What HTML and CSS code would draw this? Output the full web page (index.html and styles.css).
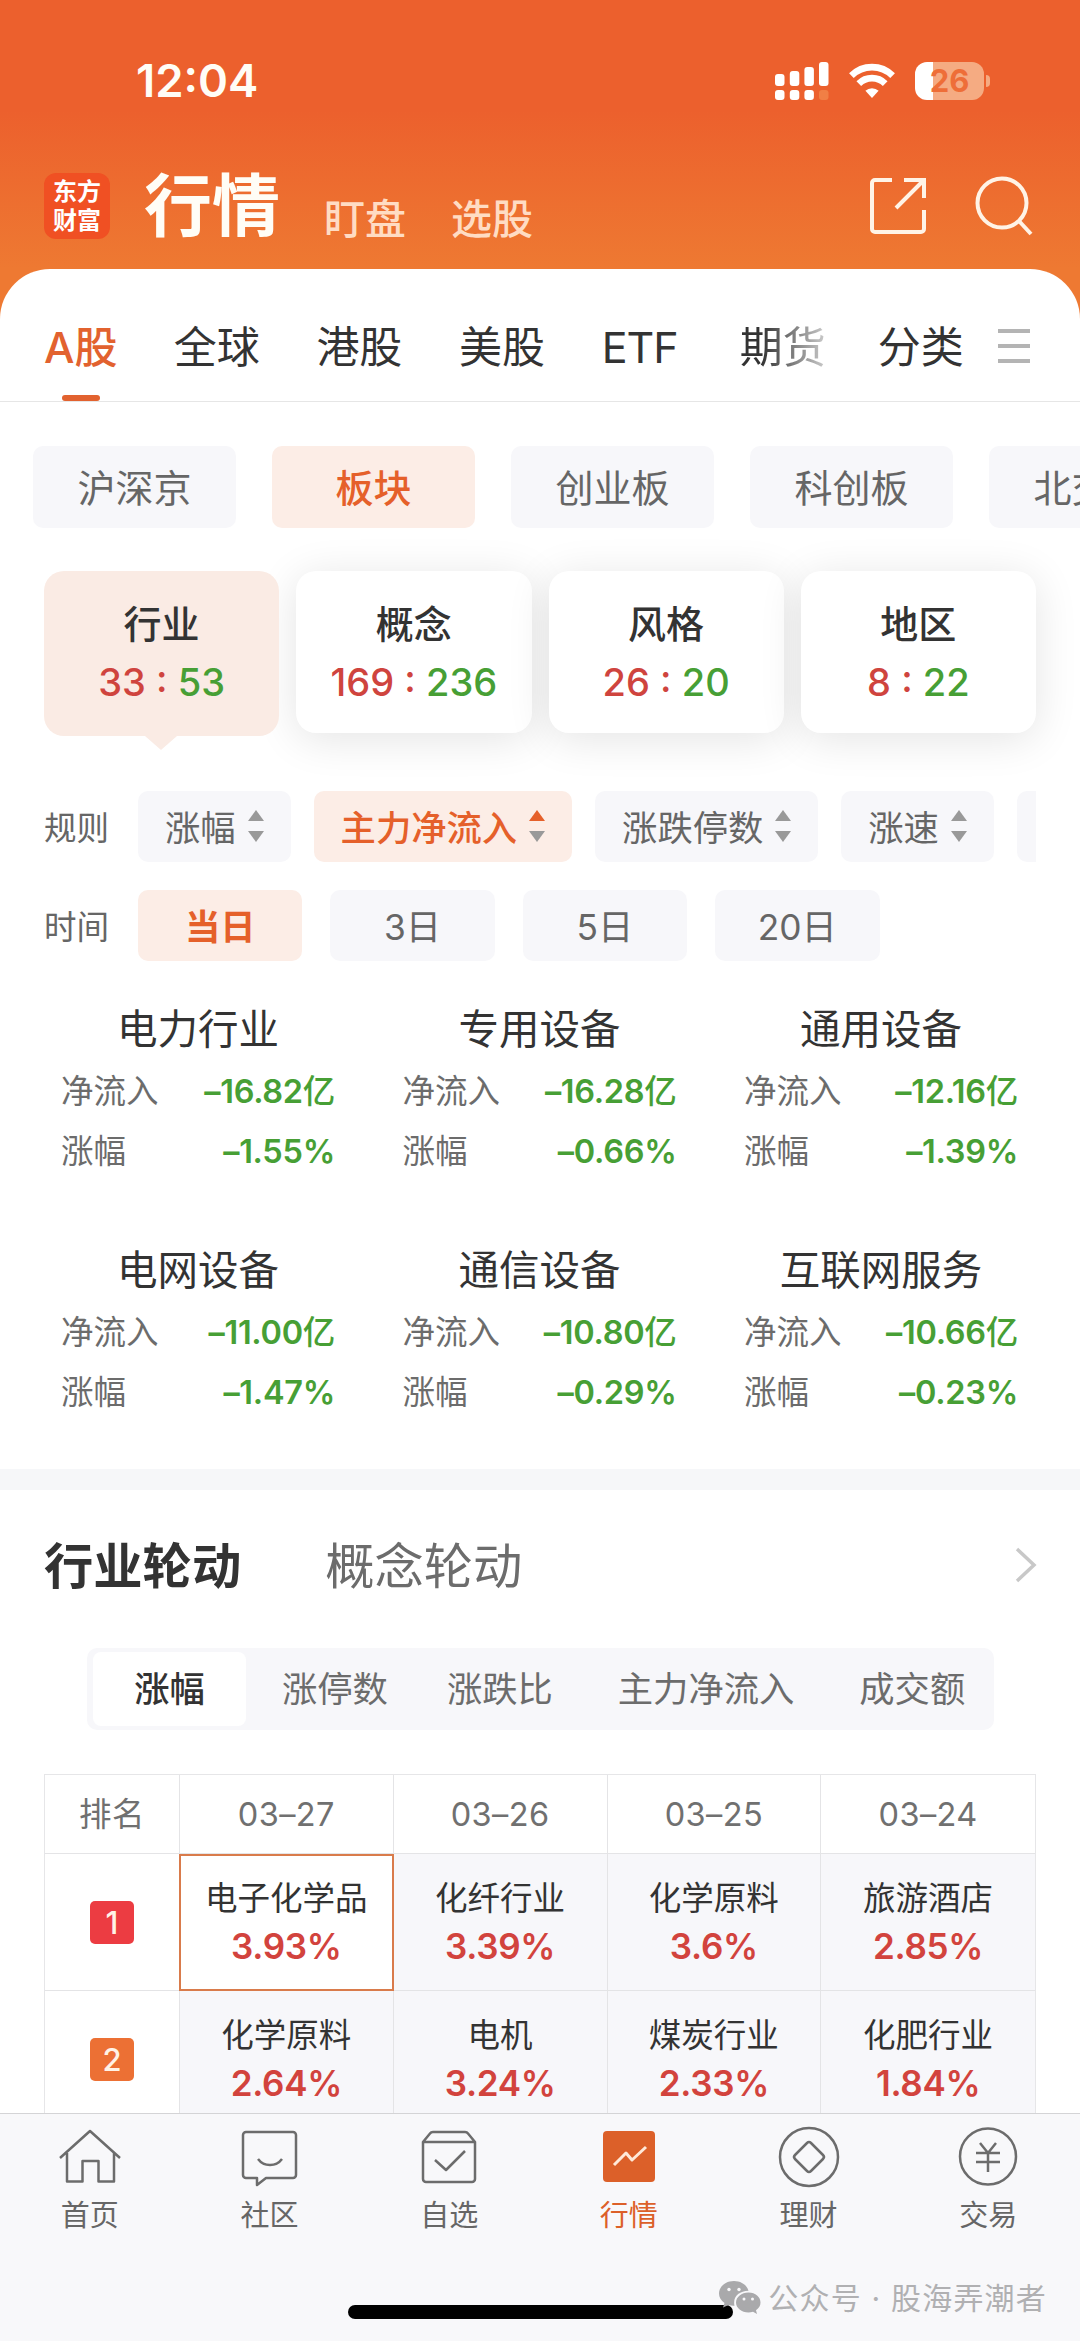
FILE: index.html
```html
<!DOCTYPE html>
<html lang="zh-CN">
<head>
<meta charset="UTF-8">
<title>行情</title>
<link rel="stylesheet" href="styles.css">
</head>
<body>
<div class="app">
  <header class="header">
    <div class="status">
      <span class="time">12:04</span>
      <svg class="signal" width="54" height="38" viewBox="0 0 54 38" fill="#fff">
        <rect x="0" y="12" width="9.5" height="12" rx="3"/>
        <rect x="14.8" y="9" width="9.5" height="15" rx="3"/>
        <rect x="29.4" y="5" width="9.5" height="19" rx="3"/>
        <rect x="44" y="0" width="9.5" height="24" rx="3"/>
        <rect x="0" y="28" width="9.5" height="10" rx="3"/>
        <rect x="14.8" y="28" width="9.5" height="10" rx="3"/>
        <rect x="29.4" y="28" width="9.5" height="10" rx="3"/>
        <rect x="44" y="28" width="9.5" height="10" rx="3" fill="#f17f45"/>
      </svg>
      <svg class="wifi" width="46" height="36" viewBox="0 0 46 36" fill="none" stroke="#fff" stroke-width="6.6">
        <path d="M2.4 12.6a29.2 29.2 0 0 1 41.2 0"/>
        <path d="M9.8 20.6a18.6 18.6 0 0 1 26.4 0"/>
        <path d="M23 35l-6.6-7.2a9.5 9.5 0 0 1 13.2 0z" fill="#fff" stroke="none"/>
      </svg>
      <div class="battery"><span>26</span></div>
      <i class="battery-cap"></i>
    </div>
    <div class="topbar">
      <div class="logo">东方<br>财富</div>
      <h1>行情</h1>
      <span class="top-link">盯盘</span>
      <span class="top-link">选股</span>
      <svg class="icon-share" width="56" height="58" viewBox="0 0 56 58" fill="none" stroke="#fff3e6" stroke-width="4">
        <path d="M22 3H5a3 3 0 0 0-3 3v46a3 3 0 0 0 3 3h46a3 3 0 0 0 3-3V33"/>
        <path d="M34 3h20v18M54 3L26 31"/>
      </svg>
      <svg class="icon-search" width="60" height="60" viewBox="0 0 60 60" fill="none" stroke="#fff3e6" stroke-width="4">
        <circle cx="28" cy="27" r="24.5"/>
        <path d="M45 45l12 13"/>
      </svg>
    </div>
  </header>

  <main class="sheet">
    <nav class="tabs">
      <span class="tab active">A股</span>
      <span class="tab">全球</span>
      <span class="tab">港股</span>
      <span class="tab">美股</span>
      <span class="tab">ETF</span>
      <span class="tab fade">期货</span>
      <span class="tab last">分类</span>
      <i class="menu"></i>
    </nav>

    <div class="chips">
      <span class="chip">沪深京</span>
      <span class="chip on">板块</span>
      <span class="chip">创业板</span>
      <span class="chip">科创板</span>
      <span class="chip">北交所</span>
    </div>

    <div class="cards">
      <div class="card on">
        <h3>行业</h3>
        <p><span class="up">33 : </span><span class="down">53</span></p>
      </div>
      <div class="card">
        <h3>概念</h3>
        <p><span class="up">169 : </span><span class="down">236</span></p>
      </div>
      <div class="card">
        <h3>风格</h3>
        <p><span class="up">26 : </span><span class="down">20</span></p>
      </div>
      <div class="card">
        <h3>地区</h3>
        <p><span class="up">8 : </span><span class="down">22</span></p>
      </div>
    </div>

    <div class="filter rule">
      <label>规则</label>
      <span class="pill">涨幅<i class="sort"></i></span>
      <span class="pill on">主力净流入<i class="sort"></i></span>
      <span class="pill">涨跌停数<i class="sort"></i></span>
      <span class="pill">涨速<i class="sort"></i></span>
      <span class="pill next"></span>
    </div>
    <div class="filter period">
      <label>时间</label>
      <span class="pill on">当日</span>
      <span class="pill">3日</span>
      <span class="pill">5日</span>
      <span class="pill">20日</span>
    </div>

    <div class="sectors">
      <div class="sector">
        <h4>电力行业</h4>
        <p>净流入<b>–16.82<span>亿</span></b></p>
        <p>涨幅<b>–1.55%</b></p>
      </div>
      <div class="sector">
        <h4>专用设备</h4>
        <p>净流入<b>–16.28<span>亿</span></b></p>
        <p>涨幅<b>–0.66%</b></p>
      </div>
      <div class="sector">
        <h4>通用设备</h4>
        <p>净流入<b>–12.16<span>亿</span></b></p>
        <p>涨幅<b>–1.39%</b></p>
      </div>
      <div class="sector">
        <h4>电网设备</h4>
        <p>净流入<b>–11.00<span>亿</span></b></p>
        <p>涨幅<b>–1.47%</b></p>
      </div>
      <div class="sector">
        <h4>通信设备</h4>
        <p>净流入<b>–10.80<span>亿</span></b></p>
        <p>涨幅<b>–0.29%</b></p>
      </div>
      <div class="sector">
        <h4>互联网服务</h4>
        <p>净流入<b>–10.66<span>亿</span></b></p>
        <p>涨幅<b>–0.23%</b></p>
      </div>
    </div>

    <section class="rotation">
      <div class="rotation-head">
        <h2>行业轮动</h2>
        <h2 class="off">概念轮动</h2>
        <svg width="22" height="36" viewBox="0 0 22 36" fill="none" stroke="#c8c8c8" stroke-width="3.5">
          <path d="M2 2l17 16L2 34"/>
        </svg>
      </div>
      <div class="segment">
        <span class="seg on">涨幅</span>
        <span class="seg">涨停数</span>
        <span class="seg">涨跌比</span>
        <span class="seg">主力净流入</span>
        <span class="seg">成交额</span>
      </div>
      <div class="rank">
        <div class="th">排名</div>
        <div class="th">03–27</div>
        <div class="th">03–26</div>
        <div class="th">03–25</div>
        <div class="th">03–24</div>

        <div class="no"><em>1</em></div>
        <div class="td on">电子化学品<b>3.93%</b></div>
        <div class="td">化纤行业<b>3.39%</b></div>
        <div class="td">化学原料<b>3.6%</b></div>
        <div class="td">旅游酒店<b>2.85%</b></div>

        <div class="no"><em class="second">2</em></div>
        <div class="td">化学原料<b>2.64%</b></div>
        <div class="td">电机<b>3.24%</b></div>
        <div class="td">煤炭行业<b>2.33%</b></div>
        <div class="td">化肥行业<b>1.84%</b></div>
      </div>
    </section>
  </main>

  <footer class="footer">
    <nav class="tabbar">
      <div class="item">
        <svg width="64" height="64" viewBox="0 0 64 64">
          <path d="M2 33L32 6l30 27M9 28v28.500h15.500V36h16v20.500H56V28"/>
        </svg>
        首页
      </div>
      <div class="item">
        <svg width="64" height="64" viewBox="0 0 64 64">
          <path d="M8 7h47a3 3 0 0 1 3 3v40a3 3 0 0 1-3 3H28l-9 7v-7H8a3 3 0 0 1-3-3V10a3 3 0 0 1 3-3z"/>
          <path d="M20 34c6 8 18 8 24 0"/>
        </svg>
        社区
      </div>
      <div class="item">
        <svg width="64" height="64" viewBox="0 0 64 64">
          <path d="M6 17l7-8.500q1-1.500 3-1.500h32q2 0 3 1.500l7 8.500v37a3 3 0 0 1-3 3H9a3 3 0 0 1-3-3zM6 17h52M18 35l11 10 19-19"/>
        </svg>
        自选
      </div>
      <div class="item on">
        <svg width="64" height="64" viewBox="0 0 64 64">
          <rect x="6" y="6" width="52" height="51" rx="4" class="fill"/>
          <path d="M17 40l12-12 6 7 14-13" class="line"/>
        </svg>
        行情
      </div>
      <div class="item">
        <svg width="64" height="64" viewBox="0 0 64 64">
          <circle cx="32" cy="32" r="29"/>
          <path d="M30 18q2-2 4 0l12 12q2 2 0 4L34 46q-2 2-4 0L18 34q-2-2 0-4z"/>
        </svg>
        理财
      </div>
      <div class="item">
        <svg width="64" height="64" viewBox="0 0 64 64">
          <circle cx="32" cy="31.500" r="28"/>
          <path d="M24 18l8 10 8-10M20 28h24M20 37h24M32 28v19"/>
        </svg>
        交易
      </div>
    </nav>
    <i class="home-indicator"></i>
    <div class="account">
      <svg width="42" height="34" viewBox="0 0 42 34">
        <path fill="#a9a9ab" d="M15 0C6.500 0 0 5.500 0 12.500c0 4 2 7 5.500 9.500L4 26.500l5.500-2.500c2 .6 4 .8 6 .7C13.500 16 20 10 29.500 9.800 28 4 22 0 15 0z"/>
        <path fill="#a9a9ab" d="M29.500 11.500C22.500 11.500 17 16 17 21.500s5.500 10 12.500 10c1.500 0 3-.2 4.500-.7l4 2.200-1-3.800c3-2 4.500-4.500 4.500-7.700 0-5.500-5-10-12-10z"/>
        <g fill="#f8f8fa">
          <circle cx="10" cy="8.500" r="1.700"/><circle cx="20" cy="8.500" r="1.700"/>
          <circle cx="25" cy="18" r="1.500"/><circle cx="33.500" cy="18" r="1.500"/>
        </g>
      </svg>
      <span>公众号 · 股海弄潮者</span>
    </div>
  </footer>
</div>
</body>
</html>
```

FILE: styles.css
```css
*, *:before, *:after{
  box-sizing: border-box;
}
body{
  margin: 0;
  background: #fff;
  color: #333;
  font-family: Inter, "Noto Sans CJK SC", sans-serif;
  font-size: 35.300px;
}
h1, h2, h3, h4, p{
  margin: 0;
  font-weight: 400;
}
svg, i{
  display: block;
  flex: none;
}
.app{
  width: 1080px;
  height: 2341px;
  overflow: hidden;
  display: flex;
  flex-direction: column;
  background: linear-gradient(#ec602d 110px, #ee7932 269px);
}

/* header */
.header{
  height: 269px;
  flex: none;
}
.status{
  height: 161px;
  padding: 0 90px 0 136px;
  display: flex;
  align-items: center;
}
.time{
  flex: 1;
  font-size: 45.500px;
  font-weight: 600;
  color: #fffdf6;
}
.wifi{
  margin: 0 20px;
}
.battery{
  width: 69px;
  height: 38px;
  border-radius: 12px;
  background: linear-gradient(to right, #fff 18px, #f5ab82 18px);
  color: #ee6e38;
  font-size: 31px;
  font-weight: 700;
  line-height: 38px;
  text-align: center;
}
.battery-cap{
  width: 4px;
  height: 12px;
  margin-left: 2px;
  border-radius: 0 4px 4px 0;
  background: #f5ab82;
}
.topbar{
  height: 90px;
  padding: 0 46px 0 44px;
  display: flex;
  align-items: center;
}
.logo{
  width: 66px;
  height: 66px;
  border-radius: 12px;
  background: #f05023;
  color: #fff;
  font-family: "Noto Sans CJK SC", sans-serif;
  font-size: 24px;
  font-weight: 700;
  line-height: 29px;
  padding-top: 2px;
  text-align: center;
}
h1{
  margin: 0 44px 0 34px;
  color: #fffdf6;
  font-size: 68px;
  font-weight: 700;
  line-height: 90px;
}
.top-link{
  margin: 20px 45px 0 0;
  color: #ffdcc3;
  font-size: 41px;
  font-weight: 500;
}
.icon-share{
  margin-left: auto;
}
.icon-search{
  margin-left: 48px;
}

/* market tabs */
.sheet{
  flex: 1;
  min-height: 0;
  overflow: hidden;
  background: #fff;
  border-radius: 50px 50px 0 0;
}
.tabs{
  height: 133px;
  padding: 0 50px 0 44px;
  border-bottom: 1px solid #e6e6e6;
  display: flex;
  align-items: center;
  font-size: 43px;
}
.tab{
  margin-right: 56.700px;
  line-height: 156px;
  height: 132px;
}
.tab:nth-child(5){
  margin-right: 62px;
  letter-spacing: -1px;
}
.tab.active{
  position: relative;
  width: 73px;
  white-space: nowrap;
  color: #e2622f;
  font-weight: 500;
}
.tab.active:after{
  content: '';
  position: absolute;
  left: 18px;
  bottom: 0;
  width: 38px;
  height: 6px;
  border-radius: 3px;
  background: #e2622f;
}
.tab.fade{
  margin-right: 52px;
  background: linear-gradient(to right, #333 25%, #ccc);
  -webkit-background-clip: text;
  background-clip: text;
  color: transparent;
}
.tab.last{
  margin-right: 0;
}
.menu{
  width: 32px;
  height: 34px;
  margin: 22px 0 0 auto;
  border-top: 4px solid #b4b4b4;
  border-bottom: 4px solid #b4b4b4;
  background: linear-gradient(#b4b4b4, #b4b4b4) center / 100% 4px no-repeat;
}

/* chips */
.chips{
  padding: 44px 0 43px 33px;
  display: flex;
  gap: 36px;
}
.chip{
  flex: none;
  width: 203px;
  height: 82px;
  border-radius: 10px;
  background: #f7f7fa;
  color: #666;
  font-size: 38px;
  line-height: 84px;
  text-align: center;
}
.chip.on{
  background: #fcede6;
  color: #e5602a;
  font-weight: 500;
}

/* cards */
.cards{
  padding: 0 44px;
  display: flex;
  gap: 17px;
}
.card{
  position: relative;
  flex: 1;
  height: 162px;
  padding-top: 25px;
  border-radius: 20px;
  background: #fff;
  box-shadow: 0 6px 44px rgba(0, 0, 0, 0.11);
  text-align: center;
}
.card.on{
  height: 165px;
  background: #faebe4;
  box-shadow: none;
  z-index: 1;
}
.card.on:after{
  content: '';
  position: absolute;
  left: 101px;
  bottom: -14px;
  border: solid transparent;
  border-width: 14px 16px 0;
  border-top-color: #faebe4;
}
.card h3{
  font-size: 38px;
  font-weight: 500;
  line-height: 56px;
}
.card p{
  font-size: 38px;
  font-weight: 500;
  line-height: 60px;
}
.up{
  color: #cf443e;
}
.down{
  color: #479f35;
}

/* filters */
.filter{
  margin: 0 44px;
  height: 71px;
  display: flex;
  align-items: center;
  overflow: hidden;
  color: #666;
}
.filter.rule{
  margin-top: 55px;
  gap: 23px;
}
.filter.period{
  margin-top: 28px;
  gap: 28px;
}
.filter label{
  flex: none;
  width: 71px;
  padding-bottom: 3px;
  font-size: 32.500px;
}
.filter.period label{
  width: 66px;
}
.pill{
  flex: none;
  height: 71px;
  padding-bottom: 3px;
  border-radius: 10px;
  background: #f7f7fa;
  display: flex;
  align-items: center;
  justify-content: center;
}
.rule .pill{
  padding: 0 27px 3px 27px;
}
.period .pill{
  width: 164.400px;
}
.pill.on{
  background: #fcede6;
  color: #e5602a;
  font-weight: 500;
}
.period .pill.on{
  font-weight: 700;
}
.rule .pill.next{
  width: 153px;
}
.sort{
  margin: 2px 0 0 12px;
  display: flex;
  flex-direction: column;
  gap: 10px;
}
.sort:before, .sort:after{
  content: '';
  border: solid transparent;
}
.sort:before{
  border-width: 0 8px 11px;
  border-bottom-color: #999;
}
.sort:after{
  border-width: 11px 8px 0;
  border-top-color: #999;
}
.on .sort:before{
  border-bottom-color: #e5602a;
}

/* sectors */
.sectors{
  padding: 38px 62px 49px 61px;
  display: grid;
  grid-template-columns: repeat(3, 274px);
  justify-content: space-between;
  row-gap: 61px;
}
.sector{
  height: 180px;
}
.sector h4{
  font-size: 40.500px;
  line-height: 61px;
  margin-bottom: 2px;
  text-align: center;
}
.sector p{
  display: flex;
  justify-content: space-between;
  color: #6c6c6c;
  font-size: 32.500px;
  line-height: 60px;
}
.sector b{
  color: #479f35;
  font-weight: 600;
  letter-spacing: -0.3px;
}
.sector b span{
  font-weight: 500;
}

/* rotation */
.rotation{
  border-top: 21px solid #f6f7f9;
}
.rotation-head{
  height: 148px;
  padding: 0 43px 0 44px;
  display: flex;
  align-items: center;
}
.rotation h2{
  margin-right: 84px;
  padding-bottom: 4px;
  font-size: 49.300px;
  font-weight: 600;
}
.rotation h2.off{
  color: #6c6c6c;
  font-weight: 400;
}
.rotation-head svg{
  margin: 2px 0 0 auto;
}
.segment{
  height: 82px;
  margin: 10px 86px 44px 87px;
  padding: 4px 0 4px 6px;
  border-radius: 10px;
  background: #f7f7fa;
  color: #6c6c6c;
  display: flex;
}
.seg{
  margin-left: 65px;
  line-height: 75px;
}
.seg:nth-child(2){
  margin-left: 36px;
}
.seg:nth-child(3){
  margin-left: 59px;
}
.seg.on{
  width: 153px;
  margin-left: 0;
  border-radius: 8px;
  background: #fff;
  color: #333;
  font-weight: 500;
  text-align: center;
}
.rank{
  margin: 0 44px;
  display: grid;
  grid-template-columns: 135px repeat(4, 1fr);
  grid-template-rows: 79px 137px 137px;
  border: 1px solid #e6e6e8;
  text-align: center;
  font-size: 32.500px;
}
.rank > div{
  border-right: 1px solid #e4e4e6;
  border-bottom: 1px solid #e4e4e6;
}
.rank > div:nth-child(5n){
  border-right: 0;
}
.th{
  color: #707070;
  letter-spacing: 0.4px;
  line-height: 80px;
}
.no{
  display: flex;
  align-items: center;
  justify-content: center;
}
.no em{
  width: 44px;
  height: 43px;
  border-radius: 5px;
  background: #ec3c42;
  color: #fff3e6;
  font-size: 31px;
  font-style: normal;
  font-weight: 500;
  line-height: 43px;
}
.no em.second{
  background: #ec7034;
}
.td{
  padding-top: 21px;
  background: #f7f7fa;
  line-height: 48px;
}
.td b{
  display: block;
  color: #d2433d;
  font-size: 35px;
  font-weight: 600;
  letter-spacing: -0.3px;
  line-height: 47px;
}
.rank > .td.on{
  background: #fff;
  margin-left: -1px;
  padding-top: 19px;
  border: 2px solid #d97b4b;
}

/* tab bar */
.footer{
  position: relative;
  height: 228px;
  flex: none;
  border-top: 1px solid #d4d4d6;
  background: #f8f8fa;
}
.tabbar{
  padding: 11px 2px 0 0;
  display: flex;
}
.item{
  flex: 1;
  display: flex;
  flex-direction: column;
  align-items: center;
  color: #666;
  font-size: 29px;
  line-height: 54px;
}
.item svg{
  fill: none;
  stroke: #6c6c6c;
  stroke-width: 2.500;
  stroke-linejoin: round;
}
.item.on{
  color: #dc6029;
}
.item .fill{
  fill: #dc6029;
  stroke: none;
}
.item .line{
  stroke: #ffe9d8;
  stroke-width: 3;
}
.home-indicator{
  position: absolute;
  left: 348px;
  bottom: 22px;
  width: 385px;
  height: 14px;
  border-radius: 7px;
  background: #000;
}
.account{
  position: absolute;
  right: 33px;
  bottom: 23px;
  display: flex;
  align-items: center;
  gap: 7px;
  color: #b0b0b2;
  font-size: 30px;
  letter-spacing: 1.200px;
  line-height: 40px;
}
```
